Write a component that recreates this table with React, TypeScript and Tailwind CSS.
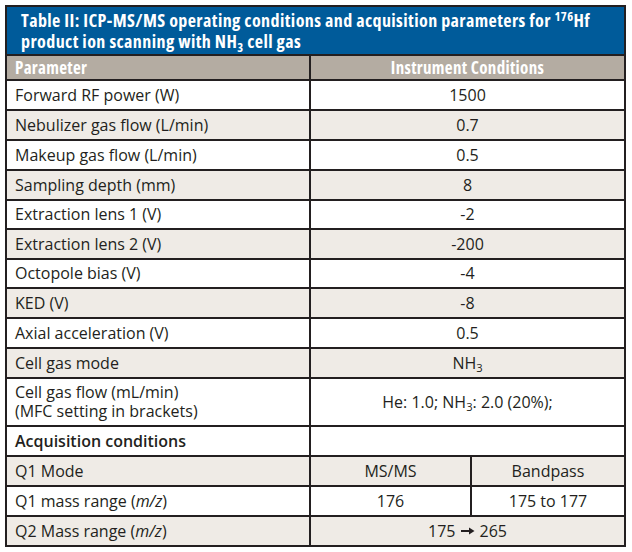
import React from 'react';

type Row = {
  label: React.ReactNode;
  value?: React.ReactNode;
  split?: [React.ReactNode, React.ReactNode];
  shaded?: boolean;
  h: string;
  bold?: boolean;
};

const NH3 = () => (
  <>
    NH<sub className="text-[0.7em] relative top-[0.3em] bottom-auto align-baseline">3</sub>
  </>
);

const mz = (
  <>
    (<i>m/z</i>)
  </>
);

const Arrow = () => (
  <svg width="14" height="10" viewBox="0 0 14 10" className="inline-block mx-[5px] align-[1px]">
    <path d="M0 5h9" stroke="#231f20" strokeWidth="2" />
    <path d="M8 1.5L13.5 5L8 8.5z" fill="#231f20" />
  </svg>
);

const rows: Row[] = [
  { label: 'Forward RF power (W)', value: '1500', h: 'h-[30px]' },
  { label: 'Nebulizer gas flow (L/min)', value: '0.7', shaded: true, h: 'h-[30px]' },
  { label: 'Makeup gas flow (L/min)', value: '0.5', h: 'h-[30px]' },
  { label: 'Sampling depth (mm)', value: '8', shaded: true, h: 'h-[30px]' },
  { label: 'Extraction lens 1 (V)', value: '-2', h: 'h-[29px]' },
  { label: 'Extraction lens 2 (V)', value: '-200', shaded: true, h: 'h-[30px]' },
  { label: 'Octopole bias (V)', value: '-4', h: 'h-[29px]' },
  { label: 'KED (V)', value: '-8', shaded: true, h: 'h-[30px]' },
  { label: 'Axial acceleration (V)', value: '0.5', h: 'h-[30px]' },
  { label: 'Cell gas mode', value: <NH3 />, shaded: true, h: 'h-[30px]' },
  {
    label: (
      <>
        Cell gas flow (mL/min)
        <br />
        (MFC setting in brackets)
      </>
    ),
    value: (
      <>
        He: 1.0; <NH3 />: 2.0 (20%);
      </>
    ),
    h: 'h-[48px]',
  },
  { label: 'Acquisition conditions', value: '', bold: true, h: 'h-[30px]' },
  { label: 'Q1 Mode', split: ['MS/MS', 'Bandpass'], shaded: true, h: 'h-[30px]' },
  { label: <>Q1 mass range {mz}</>, split: ['176', '175 to 177'], h: 'h-[30px]' },
  {
    label: <>Q2 Mass range {mz}</>,
    value: (
      <>
        175<Arrow />265
      </>
    ),
    shaded: true,
    h: 'h-[30px]',
  },
];

export default function App() {
  return (
    <div className="w-[632px] h-[552px] bg-white pt-[5px] pl-[5px] font-['Open_Sans',sans-serif] text-[#231f20]">
      <table className="w-[621px] table-fixed border-collapse border-2 border-[#231f20]">
        <colgroup>
          <col className="w-[304px]" />
          <col className="w-[161px]" />
          <col />
        </colgroup>
        <thead>
          <tr className="h-[49px]">
            <th
              colSpan={3}
              className="bg-[#005b9a] border-2 border-[#231f20] text-left align-top pl-[14px] pt-[3px] text-white font-bold text-[18px] leading-[21px] tracking-[0.4px] font-stretch-condensed"
            >
              Table II: ICP-MS/MS operating conditions and acquisition parameters for{' '}
              <sup className="text-[0.7em] relative top-[-0.5em] bottom-auto align-baseline">176</sup>Hf
              <br />
              product ion scanning with NH
              <sub className="text-[0.7em] relative top-[0.3em] bottom-auto align-baseline">3</sub> cell gas
            </th>
          </tr>
          <tr className="h-[25px] bg-[#b4aca2] text-white text-[17px] font-semibold tracking-[0.3px] font-stretch-condensed">
            <th className="border-2 border-[#231f20] text-left pl-[8px] py-0 leading-none">
              Parameter
            </th>
            <th colSpan={2} className="border-2 border-[#231f20] text-center py-0 leading-none">
              Instrument Conditions
            </th>
          </tr>
        </thead>
        <tbody className="text-[16px] leading-[19px]">
          {rows.map((r, i) => (
            <tr key={i} className={`${r.h} ${r.shaded ? 'bg-[#efebe6]' : 'bg-white'}`}>
              <td className={`border-2 border-[#231f20] pl-[8px] py-0 ${r.bold ? 'font-semibold' : ''}`}>
                {r.label}
              </td>
              {r.split ? (
                <>
                  <td className="border-2 border-[#231f20] text-center py-0">{r.split[0]}</td>
                  <td className="border-2 border-[#231f20] text-center py-0">{r.split[1]}</td>
                </>
              ) : (
                <td colSpan={2} className="border-2 border-[#231f20] text-center py-0">
                  {r.value}
                </td>
              )}
            </tr>
          ))}
        </tbody>
      </table>
    </div>
  );
}
